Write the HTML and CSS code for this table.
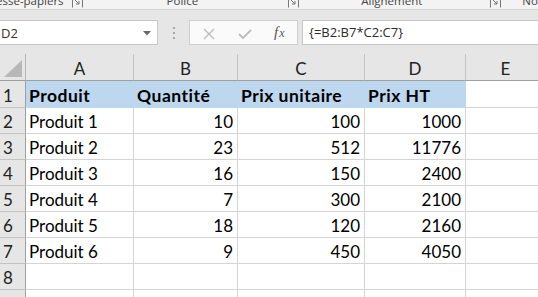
FILE: index.html
```html
<!DOCTYPE html>
<html lang="fr">
<head>
<meta charset="utf-8">
<title>Excel</title>
<link rel="stylesheet" href="styles.css">
</head>
<body>
<div class="app">
  <div class="ribbon">
    <span class="rl rl-clip">esse-papiers</span>
    <svg class="launch launch-1" width="11" height="9" viewBox="0 0 11 9"><path d="M0.5 0 V8.5 M10.5 0 V8.5 M2 0 L7 5 M7 2 V5 H4" fill="none" stroke="#777" stroke-width="1"/></svg>
    <span class="rl rl-police">Police</span>
    <svg class="launch launch-2" width="11" height="9" viewBox="0 0 11 9"><path d="M0.5 0 V8.5 M10.5 0 V8.5 M2 0 L7 5 M7 2 V5 H4" fill="none" stroke="#777" stroke-width="1"/></svg>
    <span class="rl rl-align">Alignement</span>
    <svg class="launch launch-3" width="11" height="9" viewBox="0 0 11 9"><path d="M0.5 0 V8.5 M10.5 0 V8.5 M2 0 L7 5 M7 2 V5 H4" fill="none" stroke="#777" stroke-width="1"/></svg>
    <span class="rl rl-nom">Nombre</span>
  </div>
  <div class="fbar">
    <div class="namebox">
      <span class="nb-text">D2</span>
      <svg class="nb-arrow" width="8" height="5" viewBox="0 0 8 5"><path d="M0 0 H8 L4 4.5 Z" fill="#6a6a6a"/></svg>
    </div>
    <div class="grip"><i></i><i></i><i></i></div>
    <div class="fbuttons">
      <svg class="fb-x" width="12" height="12" viewBox="0 0 12 12"><path d="M1 1 L11 11 M11 1 L1 11" stroke="#bdbdbd" stroke-width="1.4" fill="none"/></svg>
      <svg class="fb-ok" width="14" height="10" viewBox="0 0 14 10"><path d="M1 5 L5 9 L13 1" stroke="#bdbdbd" stroke-width="1.8" fill="none"/></svg>
      <span class="fb-fx">f<span class="fx-x">x</span></span>
    </div>
    <div class="finput">{=B2:B7*C2:C7}</div>
  </div>
  <div class="sheet">
    <div class="corner"><svg width="18" height="17" viewBox="0 0 18 17"><path d="M18 0 V17 H0 Z" fill="#b8b8b8"/></svg></div>
    <div class="ch">A</div><div class="ch">B</div><div class="ch">C</div><div class="ch">D</div><div class="ch">E</div>

    <div class="rh r1">1</div>
    <div class="c hd r1">Produit</div><div class="c hd r1">Quantité</div><div class="c hd r1">Prix unitaire</div><div class="c hd r1">Prix HT</div><div class="c r1"></div>

    <div class="rh">2</div>
    <div class="c">Produit 1</div><div class="c n">10</div><div class="c n">100</div><div class="c n">1000</div><div class="c"></div>

    <div class="rh">3</div>
    <div class="c">Produit 2</div><div class="c n">23</div><div class="c n">512</div><div class="c n">11776</div><div class="c"></div>

    <div class="rh">4</div>
    <div class="c">Produit 3</div><div class="c n">16</div><div class="c n">150</div><div class="c n">2400</div><div class="c"></div>

    <div class="rh">5</div>
    <div class="c">Produit 4</div><div class="c n">7</div><div class="c n">300</div><div class="c n">2100</div><div class="c"></div>

    <div class="rh">6</div>
    <div class="c">Produit 5</div><div class="c n">18</div><div class="c n">120</div><div class="c n">2160</div><div class="c"></div>

    <div class="rh">7</div>
    <div class="c">Produit 6</div><div class="c n">9</div><div class="c n">450</div><div class="c n">4050</div><div class="c"></div>

    <div class="rh">8</div>
    <div class="c"></div><div class="c"></div><div class="c"></div><div class="c"></div><div class="c"></div>

    <div class="rh">9</div>
    <div class="c"></div><div class="c"></div><div class="c"></div><div class="c"></div><div class="c"></div>
  </div>
</div>
</body>
</html>
```

FILE: styles.css
```css
* { box-sizing: border-box; }
html, body { margin: 0; padding: 0; }
body {
  width: 538px;
  height: 297px;
  overflow: hidden;
  background: #ffffff;
  font-family: "Lato", "Liberation Sans", sans-serif;
}
.app { display: flex; flex-direction: column; width: 538px; height: 297px; overflow: hidden; }

/* ribbon group labels (cut at top) */
.ribbon {
  height: 10px;
  flex: none;
  background: #f3f3f3;
  border-bottom: 1px solid #d4d4d4;
  overflow: hidden;
  display: flex;
  align-items: flex-start;
  font-family: "Open Sans", "Noto Sans", sans-serif;
  font-size: 11.5px;
  color: #444;
  white-space: nowrap;
}
.rl { display: block; line-height: 12px; margin-top: -5px; }
.rl-clip { margin-left: -4px; }
.launch { display: block; flex: none; margin-top: -1px; }
.launch-1 { margin-left: 8px; }
.rl-police { margin-left: 84px; }
.launch-2 { margin-left: 90px; }
.rl-align { margin-left: 62px; }
.launch-3 { margin-left: 68px; }
.rl-nom { margin-left: 21px; }

/* formula bar */
.fbar {
  height: 44px;
  flex: none;
  background: #e6e6e6;
  display: flex;
  align-items: flex-start;
  padding-top: 10px;
  font-family: "Open Sans", "Noto Sans", sans-serif;
  color: #333;
}
.namebox {
  width: 159px;
  height: 25px;
  margin-left: -1px;
  background: #fff;
  border: 1px solid #c6c6c6;
  display: flex;
  align-items: center;
  justify-content: space-between;
  padding: 0 6px 0 1px;
  font-size: 13px;
}
.nb-text { line-height: 23px; padding-top: 1px; }
.nb-arrow { display: block; margin-top: 1px; }
.grip {
  width: 31px;
  height: 25px;
  display: flex;
  flex-direction: column;
  align-items: center;
  justify-content: center;
  gap: 3px;
}
.grip i { display: block; width: 2px; height: 2px; background: #a8a8a8; }
.fbuttons {
  width: 109px;
  height: 25px;
  background: #fafafa;
  border: 1px solid #cfcfcf;
  display: flex;
  align-items: center;
  padding-left: 13px;
}
.fb-x { display: block; margin-top: 2px; }
.fb-ok { display: block; margin-left: 23px; margin-top: 3px; }
.fb-fx {
  margin-left: 22px;
  font-family: "Liberation Serif", "DejaVu Serif", serif;
  font-style: italic;
  font-size: 15px;
  color: #555;
  line-height: 1;
}
.fx-x { font-size: 12px; margin-left: 1px; }
.finput {
  flex: 1;
  height: 25px;
  margin-left: 4px;
  margin-right: -2px;
  background: #fff;
  border: 1px solid #c6c6c6;
  font-size: 13px;
  line-height: 23px;
  padding: 0 0 0 6px;
  color: #2b2b2b;
}

/* sheet grid */
.sheet {
  display: grid;
  grid-template-columns: 26px 108px 104px 127px 101px 80px;
  grid-template-rows: 27px 27px repeat(8, 26px);
  font-size: 17px;
  color: #000;
}
.corner {
  background: #e6e6e6;
  border-right: 1px solid #b5b5b5;
  border-bottom: 1px solid #9f9f9f;
  display: flex;
  align-items: flex-end;
  justify-content: flex-end;
  padding: 0 3px 3px 0;
}
.corner svg { display: block; }
.ch {
  background: #e6e6e6;
  border-right: 1px solid #c4c4c4;
  border-bottom: 1px solid #9f9f9f;
  text-align: center;
  line-height: 20px;
  padding-top: 5px;
  color: #222;
}
.rh {
  background: #e6e6e6;
  border-right: 1px solid #9f9f9f;
  border-bottom: 1px solid #c4c4c4;
  padding-left: 3px;
  line-height: 20px;
  padding-top: 4px;
  color: #222;
}
.rh.r1 { padding-top: 5px; }
.c {
  border-right: 1px solid #d4d4d4;
  border-bottom: 1px solid #d4d4d4;
  padding: 4px 4px 0 3px;
  line-height: 20px;
  white-space: nowrap;
  overflow: hidden;
}
.c.r1 { padding-top: 5px; }
.c.n { text-align: right; }
.c.hd {
  background: #bdd7ee;
  border-color: #bdd7ee;
  font-weight: 700;
  font-size: 17.5px;
  letter-spacing: 0.5px;
}
```
